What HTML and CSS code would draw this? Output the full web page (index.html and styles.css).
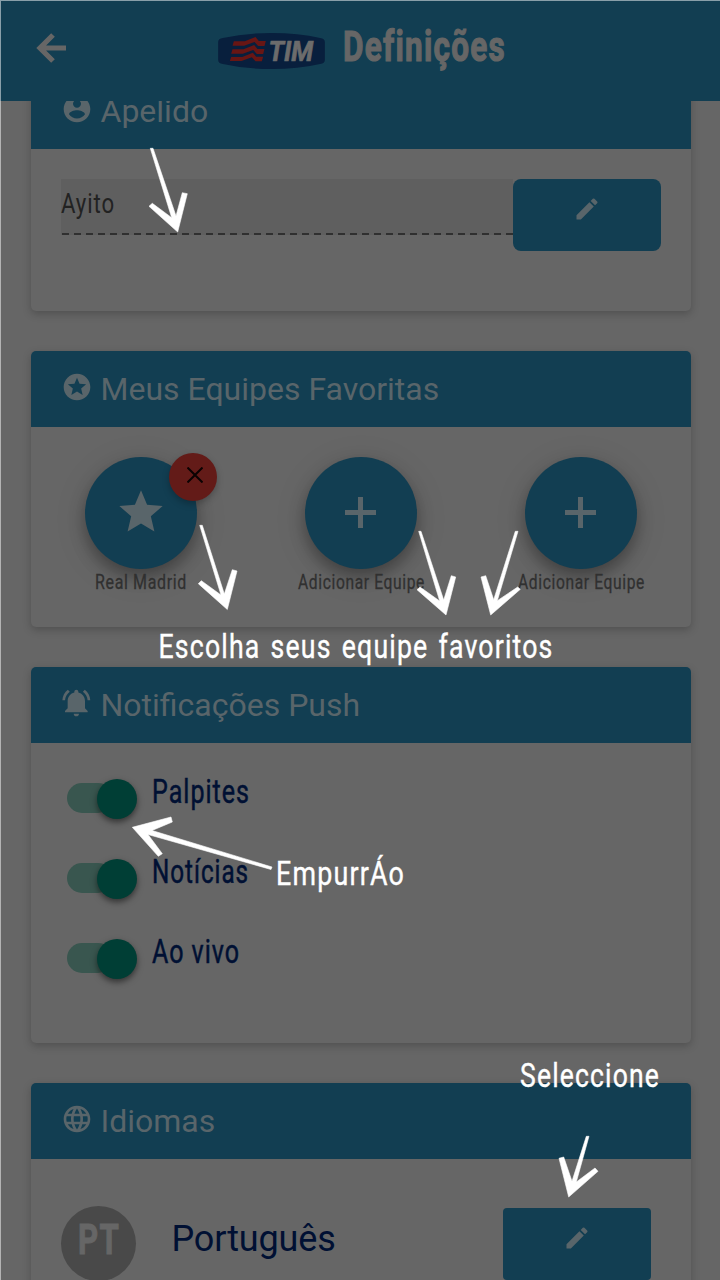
FILE: index.html
```html
<!DOCTYPE html>
<html lang="pt">
<head>
<meta charset="utf-8">
<title>Definições</title>
<link rel="stylesheet" href="styles.css">
</head>
<body>
<div class="screen">
  <header class="topbar">
    <svg class="back" width="32" height="32" viewBox="0 0 32 32"><path d="M17 3 4 16l13 13M4 16h26"/></svg>
    <div class="brand">
      <svg class="logo" width="107" height="36" viewBox="0 0 320 108">
        <path class="logo-bg" d="M0 27Q0 17 14 15Q80 0 160 0T306 15Q320 17 320 27V81Q320 91 306 93Q240 108 160 108T14 93Q0 91 0 81Z"/>
        <g class="logo-flag">
          <path d="M47 25H80L112 12 122 24H143L139 39H120L109 27 78 38H43Z"/>
          <path d="M43 49H76L108 36 118 48H139L135 63H116L105 51 74 62H39Z"/>
          <path d="M39 72H72L104 59 114 71H135L131 85H112L101 73 70 84H35Z"/>
        </g>
        <text class="logo-text" x="151" y="83" textLength="134" lengthAdjust="spacingAndGlyphs">TIM</text>
      </svg>
      <svg class="txt title" width="164" height="60"><text x="0" y="41" textLength="163" lengthAdjust="spacingAndGlyphs">Definições</text></svg>
    </div>
  </header>

  <main class="content">
    <section class="card nick">
      <h2 class="card-head">
        <svg class="icon" viewBox="0 0 24 24"><path d="M12 2C6.48 2 2 6.48 2 12s4.480 10 10 10 10-4.480 10-10S17.520 2 12 2zm0 3c1.660 0 3 1.340 3 3s-1.340 3-3 3-3-1.340-3-3 1.340-3 3-3zm0 14.200c-2.500 0-4.710-1.280-6-3.220.030-1.990 4-3.080 6-3.080 1.990 0 5.970 1.090 6 3.080-1.290 1.940-3.500 3.220-6 3.220z"/></svg>
        <span>Apelido</span>
      </h2>
      <div class="nick-row">
        <div class="field"><svg class="txt" width="54" height="54"><text x="0" y="34" textLength="54" lengthAdjust="spacingAndGlyphs">Ayito</text></svg></div>
        <div class="edit"><svg width="28" height="28" viewBox="0 0 24 24"><path d="M3 17.250V21h3.750L17.810 9.940l-3.750-3.750L3 17.250zM20.710 7.040a1 1 0 0 0 0-1.410l-2.340-2.340a1 1 0 0 0-1.410 0l-1.830 1.830 3.750 3.750 1.830-1.830z"/></svg></div>
      </div>
    </section>

    <section class="card teams">
      <h2 class="card-head">
        <svg class="icon" viewBox="0 0 24 24"><path d="M11.990 2C6.470 2 2 6.480 2 12s4.470 10 9.990 10C17.520 22 22 17.520 22 12S17.520 2 11.990 2zm4.240 16L12 15.450 7.770 18l1.120-4.810-3.730-3.230 4.920-.42L12 5l1.920 4.530 4.920.42-3.730 3.230L16.230 18z"/></svg>
        <span>Meus Equipes Favoritas</span>
      </h2>
      <div class="team-row">
        <div class="team">
          <div class="disc"><svg class="star" width="52" height="52" viewBox="0 0 24 24"><path d="M12 17.270 18.180 21l-1.640-7.030L22 9.240l-7.190-.61L12 2 9.190 8.630 2 9.240l5.460 4.730L5.820 21z"/></svg></div>
          <div class="remove"><svg width="16" height="16" viewBox="0 0 16 16"><path d="M.5.500l15 15M15.500.500l-15 15"/></svg></div>
          <svg class="txt label" width="92" height="24"><text x="0" y="19.500" textLength="92" lengthAdjust="spacingAndGlyphs">Real Madrid</text></svg>
        </div>
        <div class="team">
          <div class="disc"><svg width="31" height="31" viewBox="0 0 31 31"><path d="M13 0h5v13h13v5H18v13h-5V18H0v-5h13z"/></svg></div>
          <svg class="txt label" width="126" height="24"><text x="0" y="19.500" textLength="127" lengthAdjust="spacingAndGlyphs">Adicionar Equipe</text></svg>
        </div>
        <div class="team">
          <div class="disc"><svg width="31" height="31" viewBox="0 0 31 31"><path d="M13 0h5v13h13v5H18v13h-5V18H0v-5h13z"/></svg></div>
          <svg class="txt label" width="126" height="24"><text x="0" y="19.500" textLength="127" lengthAdjust="spacingAndGlyphs">Adicionar Equipe</text></svg>
        </div>
      </div>
    </section>

    <section class="card push">
      <h2 class="card-head">
        <svg class="icon" viewBox="0 0 24 24"><path d="M6.580 3.580 5.150 2.150C2.760 3.970 1.180 6.800 1.030 10h2c.15-2.650 1.510-4.970 3.550-6.420zM19.970 10h2c-.15-3.200-1.730-6.030-4.130-7.850l-1.430 1.430c2.040 1.450 3.410 3.770 3.560 6.420zm-1.970.5c0-3.070-2.130-5.640-5-6.320V3.500c0-.83-.67-1.500-1.500-1.500S10 2.670 10 3.500v.68c-2.870.68-5 3.250-5 6.320V16l-2 2v1h17v-1l-2-2v-5.500zM11.500 22c1.100 0 2-.9 2-2h-4c0 1.100.9 2 2 2z"/></svg>
        <span>Notificações Push</span>
      </h2>
      <div class="options">
        <div class="option"><div class="switch"><i></i></div><svg class="txt" width="98" height="60"><text x="-1" y="41" textLength="98" lengthAdjust="spacingAndGlyphs">Palpites</text></svg></div>
        <div class="option"><div class="switch"><i></i></div><svg class="txt" width="98" height="60"><text x="-1" y="41" textLength="97" lengthAdjust="spacingAndGlyphs">Notícias</text></svg></div>
        <div class="option"><div class="switch"><i></i></div><svg class="txt" width="98" height="60"><text x="-1" y="41" textLength="88" lengthAdjust="spacingAndGlyphs">Ao vivo</text></svg></div>
      </div>
    </section>

    <section class="card lang">
      <h2 class="card-head">
        <svg class="icon" viewBox="0 0 24 24"><path d="M11.990 2C6.470 2 2 6.480 2 12s4.470 10 9.990 10C17.520 22 22 17.520 22 12S17.520 2 11.990 2zm6.930 6h-2.950c-.32-1.250-.78-2.450-1.380-3.560 1.840.63 3.370 1.910 4.330 3.560zM12 4.040c.83 1.200 1.480 2.530 1.910 3.960h-3.820c.43-1.430 1.080-2.760 1.910-3.960zM4.260 14C4.100 13.360 4 12.690 4 12s.1-1.360.26-2h3.380c-.08.66-.14 1.320-.14 2s.06 1.340.14 2H4.260zm.82 2h2.950c.32 1.250.78 2.450 1.380 3.560-1.840-.63-3.370-1.900-4.330-3.560zm2.950-8H5.080c.96-1.660 2.490-2.930 4.330-3.560C8.810 5.550 8.350 6.750 8.030 8zM12 19.960c-.83-1.200-1.480-2.530-1.910-3.960h3.820c-.43 1.430-1.080 2.760-1.910 3.960zM14.340 14H9.660c-.09-.66-.16-1.320-.16-2s.07-1.350.16-2h4.680c.09.65.16 1.320.16 2s-.07 1.340-.16 2zm.25 5.560c.6-1.110 1.060-2.310 1.380-3.560h2.950c-.96 1.650-2.490 2.930-4.330 3.560zM16.360 14c.08-.66.14-1.320.14-2s-.06-1.340-.14-2h3.380c.16.64.26 1.310.26 2s-.1 1.360-.26 2h-3.380z"/></svg>
        <span>Idiomas</span>
      </h2>
      <div class="lang-row">
        <div class="code"><svg class="txt" width="40" height="60"><text x="0" y="40" textLength="42" lengthAdjust="spacingAndGlyphs">PT</text></svg></div>
        <div class="lang-name">Português</div>
        <div class="edit small"><svg width="28" height="28" viewBox="0 0 24 24"><path d="M3 17.250V21h3.750L17.810 9.940l-3.750-3.750L3 17.250zM20.710 7.040a1 1 0 0 0 0-1.410l-2.340-2.340a1 1 0 0 0-1.410 0l-1.830 1.830 3.750 3.750 1.830-1.830z"/></svg></div>
      </div>
    </section>
  </main>

  <svg class="coach" width="720" height="1280" viewBox="0 0 720 1280">
    <path d="M149 206.300 152.300 203.300 171.700 217.700 150.300 148.300H153L176 216 182.300 192.700 187.300 193.700 177.700 232Z"/>
    <path d="M198.300 583.700 201.300 580.700 221 595 199.700 525.300H202.300L224.300 594 232.300 569.700 237 571 227.300 609.500Z"/>
    <path d="M417 589.700 420 587 439.700 601 418.700 531.300H421L443.700 600 451.300 575.700 455.700 577 446 615Z"/>
    <path d="M481 577 485.700 575.700 493.700 599.700 515.300 531.300H518L497.300 600.700 517.700 587 520.300 589.300 490.700 615Z"/>
    <path d="M132.300 827.300 158.300 856.300 162.300 853.700 148 834.500 271 869.500 272 867 152 830.500 172.300 822 171 817Z"/>
    <path d="M559 1158.300 563.700 1157 572 1181.300 586.300 1136.300H589L576.300 1182 595 1168 598 1171.300 568.700 1197Z"/>
    <text x="158.500" y="658" textLength="395" lengthAdjust="spacingAndGlyphs">Escolha seus equipe favoritos</text>
    <text x="276" y="885" textLength="129" lengthAdjust="spacingAndGlyphs">EmpurrÁo</text>
    <text x="520" y="1086.500" textLength="140" lengthAdjust="spacingAndGlyphs">Seleccione</text>
  </svg>
</div>
</body>
</html>
```

FILE: styles.css
```css
* { box-sizing: border-box; }
body { margin: 0; background: #666; font-family: Roboto, "Liberation Sans", sans-serif; }
svg { display: block; flex: none; }
.screen { position: relative; width: 720px; height: 1280px; overflow: hidden; background: #666; }
.screen::after { content: ""; position: absolute; inset: 0; border: solid rgba(255, 255, 255, .5); border-width: 1px 0 0 1px; z-index: 4; }
.txt { overflow: visible; letter-spacing: .04em; }

.topbar { position: relative; z-index: 2; height: 101px; background: #123e52; display: flex; align-items: flex-start; padding: 0 0 0 36px; }
.back { margin-top: 32px; fill: none; stroke: #666; stroke-width: 5.200px; }
.brand { display: flex; margin-left: 150px; gap: 18px; }
.logo { margin-top: 33px; }
.logo-bg { fill: #081f3d; }
.logo-flag { fill: #681614; }
.logo-text { font: italic 700 82px Roboto, sans-serif; fill: #6c6c6c; stroke: #6c6c6c; stroke-width: 2px; }
.title { margin-top: 20px; font-size: 42px; font-weight: 700; fill: #666; stroke: #666; stroke-width: 1.200px; }

.content { margin-top: -28px; padding: 0 29.500px 0 30.500px; display: flex; flex-direction: column; gap: 40px; }
.card { border-radius: 5px; background: #666; box-shadow: 0 3px 9px rgba(0, 0, 0, .22); flex: none; }
.nick { height: 238px; }
.teams { height: 276px; }
.push { height: 376px; }
.lang { height: 276px; }
.card-head { margin: 0; height: 76px; padding-left: 30px; display: flex; gap: 8px; background: #123e52; border-radius: 5px 5px 0 0; color: #59656a; font-size: 32px; font-weight: 400; line-height: 38px; }
.card-head span { margin-top: 19px; white-space: nowrap; }
.icon { width: 32px; height: 32px; margin-top: 20px; fill: #59656a; }

.nick-row { display: flex; padding: 30px 30px 0; }
.field { width: 452px; height: 56px; background: repeating-linear-gradient(90deg, #303030 0 7px, #5f5f5f 7px 12px) 1px 54px / 100% 2px no-repeat #5f5f5f; font-size: 27px; fill: #222; }
.edit { width: 148px; height: 72px; border-radius: 8px; background: #123e52; display: flex; justify-content: center; padding-top: 16px; fill: #59656a; }

.team-row { display: flex; }
.team { position: relative; width: 220px; padding-top: 30px; display: flex; flex-direction: column; align-items: center; }
.disc { width: 112px; height: 112px; border-radius: 50%; background: #123e52; display: flex; align-items: center; justify-content: center; fill: #59656a; box-shadow: 0 8px 16px rgba(0, 0, 0, .32), 0 6px 36px rgba(0, 0, 0, .09); }
.disc svg { margin-top: -2px; }
.disc .star { margin-top: -3px; }
.remove { position: absolute; left: 138px; top: 26px; width: 48px; height: 48px; border-radius: 50%; background: #631b18; display: flex; justify-content: center; padding: 14px 0 0 4px; box-shadow: 0 3px 7px rgba(0, 0, 0, .25); fill: none; stroke: #0b0202; stroke-width: 2px; }
.label { font-size: 20.500px; fill: #303030; stroke: #303030; stroke-width: .3px; position: relative; }

.options { padding: 26px 0 0 36px; }
.option { display: flex; height: 80px; gap: 40px; }
.switch { position: relative; width: 46px; height: 30px; margin-top: 14px; border-radius: 15px; background: #39564f; }
.switch i { position: absolute; left: 30px; top: -4px; width: 40px; height: 40px; border-radius: 50%; background: #003e35; box-shadow: 0 3px 6px rgba(0, 0, 0, .5); }
.option .txt { margin: -7px 0 0; font-size: 32.500px; fill: #001033; stroke: #001033; stroke-width: .5px; }

.lang-row { display: flex; padding: 47px 40px 0 30px; }
.code { width: 75px; height: 75px; border-radius: 50%; background: #494949; display: flex; justify-content: center; font-size: 42px; font-weight: 700; fill: #666; stroke: #666; stroke-width: 1px; }
.code .txt { margin-top: 8px; }
.lang-name { width: 331px; margin-left: 36px; padding-top: 12px; font-size: 36px; line-height: 42px; letter-spacing: -.15px; color: #001033; }
.edit.small { margin-top: 2px; border-radius: 4px; }

.coach { position: absolute; left: 0; top: 0; z-index: 3; fill: #fff; font-size: 34px; }
.coach path { stroke: #fff; stroke-width: .6px; }
.coach text { stroke: #fff; stroke-width: .4px; letter-spacing: 1.500px; word-spacing: 3px; }
```
